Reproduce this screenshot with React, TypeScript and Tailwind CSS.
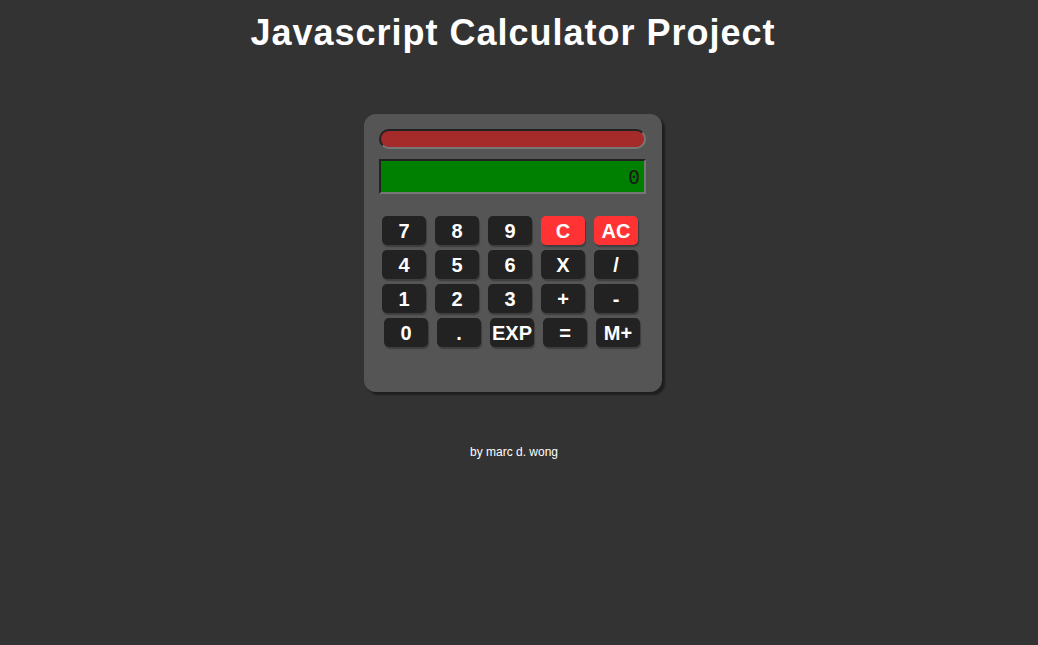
import React from 'react';

const rows: string[][] = [
  ['7', '8', '9', 'C', 'AC'],
  ['4', '5', '6', 'X', '/'],
  ['1', '2', '3', '+', '-'],
  ['0', '.', 'EXP', '=', 'M+'],
];

const Key: React.FC<{ label: string }> = ({ label }) => {
  const red = label === 'C' || label === 'AC';
  return (
    <button
      className={
        'w-[44px] h-[29px] rounded-[5px] text-white text-[20px] font-bold leading-none shadow-[1px_2px_1px_#3f3f3f] ' +
        (red ? 'bg-[#ff3333]' : 'bg-[#222222]')
      }
    >
      {label}
    </button>
  );
};

const App: React.FC = () => {
  return (
    <div
      className="min-h-screen bg-[#333333] flex flex-col items-center pr-[12px] text-white"
      style={{ fontFamily: '"Liberation Sans", Arial, sans-serif' }}
    >
      <h1 className="mt-[12px] text-[36px] tracking-[1px] font-bold leading-[41px]">Javascript Calculator Project</h1>

      <div className="mt-[61px] w-[298px] h-[278px] bg-[#555555] rounded-[12px] shadow-[3px_3px_2px_#1e1e1e] pt-[15px] pl-[15px]">
        <div className="w-[267px] h-[20px] rounded-full bg-[#a52a2a] border-2 border-t-[#222222] border-l-[#222222] border-b-[#777777] border-r-[#777777]" />
        <div className="mt-[10px] w-[267px] h-[35px] bg-[#008000] border-2 border-t-[#222222] border-l-[#222222] border-b-[#777777] border-r-[#777777] flex items-center justify-end pr-[4px]">
          <span
            className="text-[20px] text-[#1a1a1a] leading-none"
            style={{ fontFamily: '"DejaVu Sans Mono", monospace' }}
          >
            0
          </span>
        </div>

        <div className="mt-[22px] flex flex-col gap-[5px]">
          {rows.map((row, i) => (
            <div key={i} className={'flex gap-[9px] ' + (i === 3 ? 'pl-[5px]' : 'pl-[3px]')}>
              {row.map((k) => (
                <Key key={k} label={k} />
              ))}
            </div>
          ))}
        </div>
      </div>

      <div className="mt-[53px] pl-[2px] text-[12px] leading-[14px]">by marc d. wong</div>
    </div>
  );
};

export default App;
